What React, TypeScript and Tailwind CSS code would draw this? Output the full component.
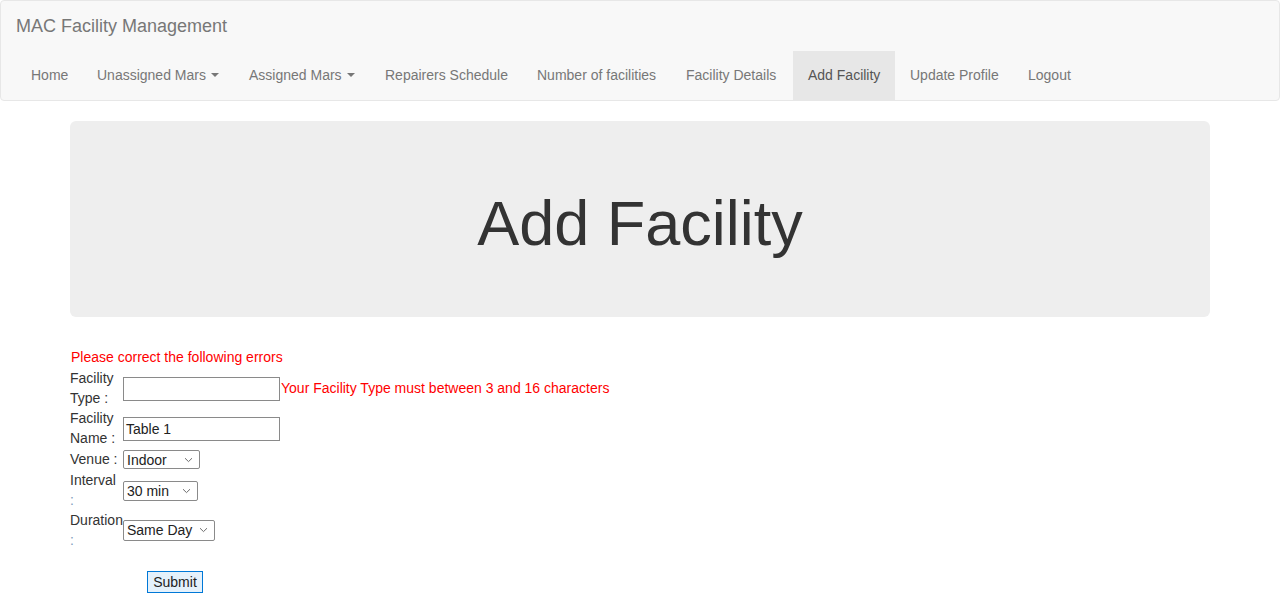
import React from "react";

const font = { fontFamily: '"Liberation Sans", Arial, sans-serif' };

function Caret() {
  return (
    <span className="ml-[5px] inline-block h-0 w-0 align-middle border-t-[4px] border-x-[4px] border-t-[#777] border-x-transparent" />
  );
}

function Chevron() {
  return (
    <svg width="9" height="6" viewBox="0 0 9 6" className="absolute right-[6px] top-1/2 -translate-y-1/2">
      <path d="M1 1.2 L4.5 4.6 L8 1.2" fill="none" stroke="#6d6d6d" strokeWidth="1" />
    </svg>
  );
}

function FakeSelect({ value, w, h }: { value: string; w: string; h: string }) {
  return (
    <div className={`relative inline-block align-middle ${w} ${h} border border-[#8a8a8a] rounded-[2px] bg-white`}>
      <span className="absolute left-[3px] top-1/2 -translate-y-1/2 text-[14px] leading-[16px] text-[#222]">{value}</span>
      <Chevron />
    </div>
  );
}

export default function App() {
  const items = [
    { label: "Home", w: "w-[66px]" },
    { label: "Unassigned Mars", caret: true, w: "w-[152px]" },
    { label: "Assigned Mars", caret: true, w: "w-[136px]" },
    { label: "Repairers Schedule", w: "w-[152px]" },
    { label: "Number of facilities", w: "w-[149px]" },
    { label: "Facility Details", w: "w-[122px]" },
    { label: "Add Facility", active: true, w: "w-[102px]" },
    { label: "Update Profile", w: "w-[118px]" },
    { label: "Logout", w: "w-[80px]" },
  ];
  return (
    <div className="min-h-[610px] bg-white text-[#333] text-[14px] leading-[20px]" style={font}>
      <nav className="border border-[#e7e7e7] bg-[#f8f8f8] rounded-[4px]">
        <div className="h-[50px] px-[15px] py-[15px] text-[18px] leading-[20px] text-[#777]">MAC Facility Management</div>
        <ul className="flex h-[49px] pl-[15px]">
          {items.map((it) => (
            <li
              key={it.label}
              className={`flex shrink-0 items-center whitespace-nowrap px-[15px] pb-[2px] ${it.w} ${it.active ? "bg-[#e7e7e7] text-[#555]" : "text-[#777]"}`}
            >
              {it.label}
              {it.caret && <Caret />}
            </li>
          ))}
        </ul>
      </nav>

      <div className="mx-[70px] mt-[20px] mb-[30px] h-[196px] rounded-[6px] bg-[#eeeeee] pt-[48px] text-center">
        <h1 className="mt-[20px] text-[63px] leading-[69px] text-[#333]">Add Facility</h1>
      </div>

      <div className="mx-[70px]">
        <div className="text-[#ff0000] pl-[1px] h-[21px]">Please correct the following errors</div>
        <table className="border-collapse">
          <tbody>
            <tr className="h-[40px]">
              <td className="w-[53px] align-middle">Facility Type :</td>
              <td className="align-middle">
                <input className="mt-[2px] block h-[24px] w-[157px] border border-[#8a8a8a] bg-white px-[2px]" />
              </td>
              <td className="align-middle text-[#ff0000] pl-[1px] whitespace-nowrap">Your Facility Type must between 3 and 16 characters</td>
            </tr>
            <tr className="h-[40px]">
              <td className="w-[53px] align-middle">Facility Name :</td>
              <td className="align-middle">
                <div className="mt-[2px] flex h-[24px] w-[157px] items-center border border-[#8a8a8a] bg-white px-[2px] text-[14px] text-[#222]">Table 1</div>
              </td>
              <td />
            </tr>
            <tr className="h-[22px]">
              <td className="w-[53px] align-middle">Venue :</td>
              <td className="align-middle">
                <FakeSelect value="Indoor" w="w-[77px]" h="h-[19px]" />
              </td>
              <td />
            </tr>
            <tr className="h-[40px]">
              <td className="w-[53px] align-middle">
                Interval
                <br />
                <span className="text-[#7f9cbb]">:</span>
              </td>
              <td className="align-middle">
                <FakeSelect value="30 min" w="w-[75px]" h="h-[20px]" />
              </td>
              <td />
            </tr>
            <tr className="h-[40px]">
              <td className="w-[53px] align-middle">
                Duration
                <br />
                <span className="text-[#7f9cbb]">:</span>
              </td>
              <td className="align-middle">
                <FakeSelect value="Same Day" w="w-[92px]" h="h-[21px]" />
              </td>
              <td />
            </tr>
            <tr className="h-[21px]">
              <td colSpan={3} />
            </tr>
            <tr>
              <td colSpan={2} className="text-center">
                <button className="h-[22px] w-[56px] border border-[#0078d7] bg-[#e5f1fb] text-[14px] leading-[18px] text-[#222]">Submit</button>
              </td>
              <td />
            </tr>
          </tbody>
        </table>
      </div>
    </div>
  );
}
